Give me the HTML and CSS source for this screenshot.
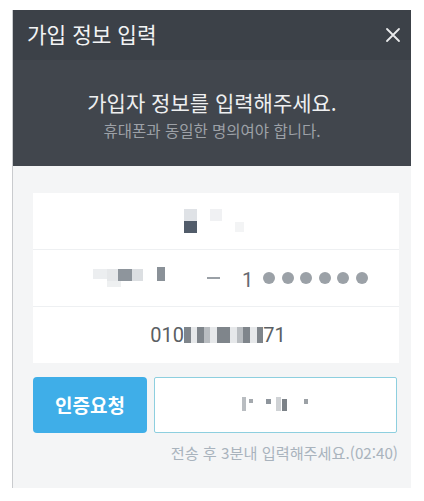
FILE: index.html
```html
<!DOCTYPE html>
<html lang="ko">
<head>
<meta charset="utf-8">
<link rel="stylesheet" href="styles.css">
</head>
<body>
<div class="dialog">
  <div class="titlebar">
    <span class="title">가입 정보 입력</span>
    <svg class="close" width="16" height="16" viewBox="0 0 16 16"><path d="M2 2L14 14M14 2L2 14" stroke="#e9eaec" stroke-width="1.8" stroke-linecap="round"/></svg>
  </div>
  <div class="intro">
    <div class="heading">가입자 정보를 입력해주세요.</div>
    <div class="sub">휴대폰과 동일한 명의여야 합니다.</div>
  </div>
  <div class="body">
    <div class="box">
      <div class="row">
        <span class="mosaic name">
          <span class="px p1"></span><span class="px p2"></span><span class="px p3"></span><span class="px p4"></span>
        </span>
      </div>
      <div class="row idrow">
        <span class="mosaic birth">
          <span class="px b1"></span><span class="px b2"></span><span class="px b3"></span><span class="px b4"></span><span class="px b5"></span><span class="px b6"></span>
        </span>
        <span class="dash"></span>
        <span class="one">1</span>
        <span class="dots"><i></i><i></i><i></i><i></i><i></i><i></i></span>
      </div>
      <div class="row phone">
        <span>010</span><span class="pmask"><i class="d"></i><i class="l"></i><i class="d"></i><i class="m"></i><i class="l"></i><i class="d"></i><i class="d"></i><i class="l"></i><i class="m"></i><i class="d"></i><i class="l"></i><i class="d"></i></span><span>71</span>
      </div>
    </div>
    <div class="verify">
      <button class="req">인증요청</button>
      <div class="code"><span class="cmask"><i class="c1"></i><i class="c2"></i><i class="c3"></i><i class="c4"></i><i class="c5"></i><i class="c6"></i></span></div>
    </div>
    <div class="hint">전송 후 3분내 입력해주세요.(02:40)</div>
  </div>
</div>
</body>
</html>
```
FILE: styles.css
```css
* { box-sizing: border-box; }
body {
  margin: 0;
  background: #fff;
  font-family: "Noto Sans CJK KR", "Noto Sans", sans-serif;
}
.dialog {
  margin: 10px 0 0 12px;
  width: 399px;
  border-left: 1px solid #c9cbce;
}
.titlebar {
  height: 50px;
  background: #3c4148;
  display: flex;
  align-items: center;
  justify-content: space-between;
  padding: 0 10px 2px 14px;
}
.title {
  color: #f2f3f4;
  font-size: 21.3px;
  line-height: 1;
}
.close { display: block; margin-top: 1px; }
.intro {
  height: 106px;
  background: #41464d;
  text-align: center;
  padding-top: 28px;
}
.heading {
  color: #eeeff0;
  font-size: 21px;
  line-height: 28px;
}
.sub {
  color: #9da1a7;
  font-size: 15.5px;
  line-height: 22px;
  margin-top: 3px;
}
.body {
  background: #f4f5f6;
  padding: 27px 12px 26px 20px;
}
.box {
  background: #fff;
}
.row {
  height: 57px;
  border-bottom: 1px solid #eef0f2;
  display: flex;
  align-items: center;
  justify-content: center;
  position: relative;
}
.row:last-child { border-bottom: none; height: 56px; }
.mosaic { position: relative; display: block; }
.px { position: absolute; display: block; }
.name { width: 60px; height: 24px; margin-left: -4px; }
.p1 { left: 0; top: 0; width: 13px; height: 12px; background: #dfe2e6; }
.p2 { left: 0; top: 12px; width: 13px; height: 12px; background: #515c6a; }
.p3 { left: 26px; top: 0; width: 12px; height: 12px; background: #f0f1f3; }
.p4 { left: 51px; top: 13px; width: 9px; height: 10px; background: #f3f4f5; }
.idrow { justify-content: flex-start; padding-left: 60px; }
.birth { width: 72px; height: 20px; margin-top: 2px; }
.b1 { left: 0; top: 0; width: 14px; height: 10px; background: #eceef0; }
.b2 { left: 14px; top: 0; width: 11px; height: 18px; background: #e6e8ea; }
.b3 { left: 25px; top: 0; width: 14px; height: 12px; background: #8e959c; }
.b4 { left: 39px; top: 0; width: 11px; height: 12px; background: #dcdfe2; }
.b5 { left: 64px; top: -2px; width: 8px; height: 14px; background: #8a9198; }
.b6 { left: 14px; top: 12px; width: 14px; height: 6px; background: #eef0f1; }
.dash {
  display: block;
  width: 13px;
  height: 2px;
  background: #9aa0a6;
  margin-left: 42px;
}
.one {
  color: #666a6f;
  font-family: Roboto, "Noto Sans", sans-serif;
  font-size: 20px;
  line-height: 1;
  margin-left: 22px;
  margin-top: 4px;
}
.dots { display: flex; gap: 6.5px; margin-left: 10px; }
.dots i {
  display: block;
  width: 12px;
  height: 12px;
  border-radius: 50%;
  background: #9ba1a7;
}
.phone {
  color: #5b5f64;
  font-family: Roboto, "Noto Sans", sans-serif;
  font-size: 20px;
  line-height: 1;
  padding-left: 4px;
}
.pmask { display: flex; height: 16px; align-items: stretch; }
.pmask i { display: block; width: 6.6px; }
.pmask .d { background: #7f858b; }
.pmask .m { background: #b9bdc1; }
.pmask .l { background: #e6e8ea; }
.verify {
  display: flex;
  gap: 7px;
  margin-top: 14px;
  height: 56px;
}
.req {
  width: 114px;
  height: 56px;
  border: none;
  border-radius: 4px;
  background: #3faee8;
  color: #fff;
  font-family: "Noto Sans CJK KR", sans-serif;
  font-size: 19px;
  font-weight: 700;
  padding: 0 0 2px;
}
.code {
  width: 243px;
  background: #fff;
  border: 1px solid #8dcfdf;
  border-radius: 2px;
  display: flex;
  align-items: center;
  justify-content: center;
}
.cmask { position: relative; display: block; width: 70px; height: 16px; margin-left: 2px; }
.cmask i { position: absolute; display: block; }
.c1 { left: 0; top: 0; width: 4px; height: 14px; background: #b9bdc1; }
.c2 { left: 7px; top: 2px; width: 4px; height: 4px; background: #a4a9ae; }
.c3 { left: 24px; top: 2px; width: 5px; height: 5px; background: #8e959c; }
.c4 { left: 34px; top: 0; width: 5px; height: 14px; background: #cfd2d5; }
.c5 { left: 40px; top: 2px; width: 5px; height: 12px; background: #7c8288; }
.c6 { left: 62px; top: 2px; width: 4px; height: 5px; background: #9ca1a6; }
.hint {
  text-align: right;
  color: #a9b3bd;
  font-size: 15.2px;
  line-height: 20px;
  margin-top: 9px;
  padding-right: 1px;
}
```
